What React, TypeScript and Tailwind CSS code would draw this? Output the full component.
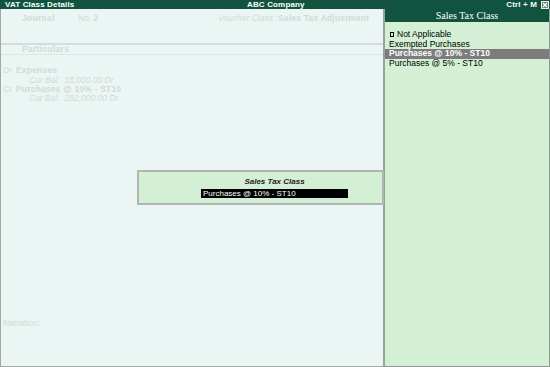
import React from "react";

const sans = { fontFamily: '"Liberation Sans", Arial, sans-serif' };
const serif = { fontFamily: '"Liberation Serif", "Times New Roman", serif' };

function CloseBox() {
  return (
    <svg width="8" height="8" viewBox="0 0 8 8" className="block">
      <rect x="0.5" y="0.5" width="7" height="7" fill="#6f7f78" stroke="#e8eeec" strokeWidth="1" />
      <path d="M2 2 L6 6 M6 2 L2 6" stroke="#ffffff" strokeWidth="1.2" />
    </svg>
  );
}

export default function App() {
  const faded = "text-[#d2dad8]";
  return (
    <div className="relative w-[550px] h-[367px] overflow-hidden bg-[#ebf5f3] flex flex-col" style={sans}>
      {/* Title bar */}
      <div className="h-[9px] bg-[#11533f] flex items-center text-white font-bold text-[8px] leading-[9px] relative">
        <span className="pl-[5px] w-[200px] tracking-[0.15px]">VAT Class Details</span>
        <span className="absolute left-[247px] tracking-[0.15px]">ABC Company</span>
        <span className="ml-auto mr-[4px] tracking-[0.15px]">Ctrl + M</span>
        <span className="mr-[1px]">
          <CloseBox />
        </span>
      </div>

      <div className="flex flex-1 min-h-0">
        {/* Left panel */}
        <div className="w-[383px] border-l border-b border-[#a3a9a7] flex flex-col text-[8.5px]">
          <div className="h-[4px]" />
          <div className={`flex items-center h-[10px] ${faded}`}>
            <span className="ml-[21px] w-[56px] font-bold tracking-[0.3px]">Journal</span>
            <span className="w-[140px]">
              No. <span className="font-bold">2</span>
            </span>
            <span className="w-[60px] italic">Voucher Class :</span>
            <span className="font-bold tracking-[0.2px]">Sales Tax Adjustment</span>
          </div>
          <div className="h-[20px]" />
          <div className="h-[2px] bg-[#d6dbdb]" />
          <div className={`h-[9px] flex items-center ${faded}`}>
            <span className="ml-[21px] font-bold tracking-[0.3px]">Particulars</span>
          </div>
          <div className="h-[1px] bg-[#dfe4e4]" />
          <div className="h-[11px]" />
          <div className={`flex flex-col ${faded}`}>
            <div className="h-[9.5px] flex items-center">
              <span className="ml-[2px] w-[13px]">Dr</span>
              <span className="font-bold tracking-[0.2px]">Expenses</span>
            </div>
            <div className="h-[9px] flex items-center">
              <span className="ml-[28px] italic">Cur Bal:&nbsp; 18,000.00 Dr</span>
            </div>
            <div className="h-[9.5px] flex items-center">
              <span className="ml-[2px] w-[13px]">Cr</span>
              <span className="font-bold tracking-[0.2px]">Purchases @ 10% - ST10</span>
            </div>
            <div className="h-[9px] flex items-center">
              <span className="ml-[28px] italic">Cur Bal:&nbsp; 282,000.00 Dr</span>
            </div>
          </div>
          <div className="flex-1" />
          <div className={`h-[10px] flex items-center ${faded}`}>
            <span className="ml-[2px]">Narration:</span>
          </div>
          <div className="h-[38px]" />
        </div>

        {/* Right panel */}
        <div className="w-[167px] border-l-2 border-l-[#9aa19e] border-r border-r-[#8f9693] border-b border-b-[#8f9693] bg-[#d3f0d5] flex flex-col">
          <div className="h-[13px] bg-[#11533f] text-white text-[10px] leading-[13px] text-center" style={serif}>
            Sales Tax Class
          </div>
          <div className="pt-[8px] flex flex-col text-[8.5px] text-black">
            <div className="h-[9.5px] flex items-center pl-[5px]">
              <span className="inline-block w-[4px] h-[5px] border border-black mr-[3px]" />
              Not Applicable
            </div>
            <div className="h-[9.5px] flex items-center pl-[4px]">Exempted Purchases</div>
            <div className="h-[9.5px] flex items-center pl-[4px] bg-[#7c7c7c] text-white font-bold">
              Purchases @ 10% - ST10
            </div>
            <div className="h-[9.5px] flex items-center pl-[4px]">Purchases @ 5% - ST10</div>
          </div>
        </div>
      </div>

      {/* Popup dialog */}
      <div className="absolute left-[137px] top-[170px] w-[247px] h-[35px] bg-[#d3f0d5] border-2 border-[#b0b7b3] flex flex-col">
        <div className="h-[16px] flex items-end justify-center pl-[28px] text-[8px] font-bold italic text-[#222] leading-[10px] pb-[1px]">
          Sales Tax Class
        </div>
        <div className="flex pt-[1px]">
          <div className="ml-[62px] w-[147px] h-[9px] bg-black text-white text-[8px] leading-[9px] pl-[2px]">
            Purchases @ 10% - ST10
          </div>
        </div>
      </div>
    </div>
  );
}
